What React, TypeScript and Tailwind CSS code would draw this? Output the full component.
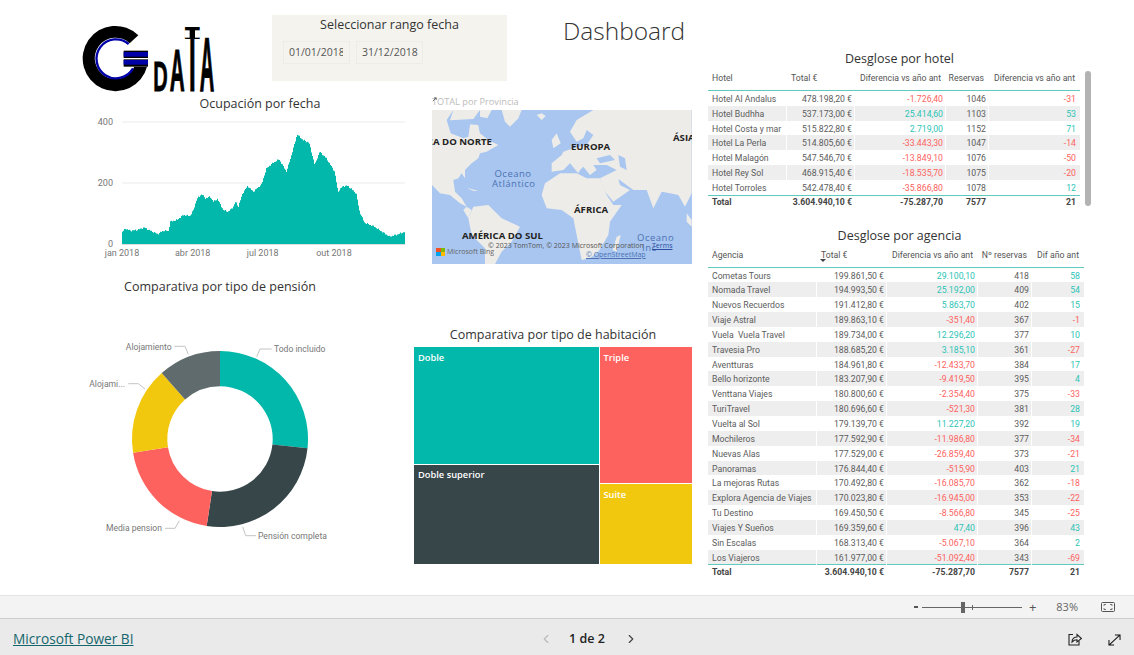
import { ChevronLeft, ChevronRight } from "lucide-react";

const ui = "font-['Open_Sans',sans-serif]";
const din = "font-['Roboto',sans-serif]";

type Row = [string, string, string, string, string];

const hotels: Row[] = [
  ["Hotel Al Andalus", "478.198,20 €", "-1.726,40", "1046", "-31"],
  ["Hotel Budhha", "537.173,00 €", "25.414,60", "1103", "53"],
  ["Hotel Costa y mar", "515.822,80 €", "2.719,00", "1152", "71"],
  ["Hotel La Perla", "514.805,60 €", "-33.443,30", "1047", "-14"],
  ["Hotel Malagón", "547.546,70 €", "-13.849,10", "1076", "-50"],
  ["Hotel Rey Sol", "468.915,40 €", "-18.535,70", "1075", "-20"],
  ["Hotel Torroles", "542.478,40 €", "-35.866,80", "1078", "12"],
];

const agencies: Row[] = [
  ["Cometas Tours", "199.861,50 €", "29.100,10", "418", "58"],
  ["Nomada Travel", "194.993,50 €", "25.192,00", "409", "54"],
  ["Nuevos Recuerdos", "191.412,80 €", "5.863,70", "402", "15"],
  ["Viaje Astral", "189.863,10 €", "-351,40", "367", "-1"],
  ["Vuela  Vuela Travel", "189.734,00 €", "12.296,20", "377", "10"],
  ["Travesia Pro", "188.685,20 €", "3.185,10", "361", "-27"],
  ["Aventturas", "184.961,80 €", "-12.433,70", "384", "17"],
  ["Bello horizonte", "183.207,90 €", "-9.419,50", "395", "4"],
  ["Venttana Viajes", "180.800,60 €", "-2.354,40", "375", "-33"],
  ["TuriTravel", "180.696,60 €", "-521,30", "381", "28"],
  ["Vuelta al Sol", "179.139,70 €", "11.227,20", "392", "19"],
  ["Mochileros", "177.592,90 €", "-11.986,80", "377", "-34"],
  ["Nuevas Alas", "177.529,00 €", "-26.859,40", "373", "-21"],
  ["Panoramas", "176.844,40 €", "-515,90", "403", "21"],
  ["La mejoras Rutas", "170.492,80 €", "-16.085,70", "362", "-18"],
  ["Explora Agencia de Viajes", "170.023,80 €", "-16.945,00", "353", "-22"],
  ["Tu Destino", "169.450,50 €", "-8.566,80", "345", "-25"],
  ["Viajes Y Sueños", "169.359,60 €", "47,40", "396", "43"],
  ["Sin Escalas", "168.313,40 €", "-5.067,10", "364", "2"],
  ["Los Viajeros", "161.977,00 €", "-51.092,40", "343", "-69"],
];

const tone = (v: string) => (v.startsWith("-") ? "text-[#FD625E]" : "text-[#2CC4B6]");

// measured from the reference, zoomed coordinates -> turned into daily bars below
const curve = [
  [156, 695], [165, 686], [180, 692], [200, 690], [222, 683], [240, 692], [262, 702], [280, 692], [295, 693], [300, 665],
  [320, 660], [340, 645], [360, 648], [370, 630], [380, 597], [395, 582], [405, 595], [420, 590], [430, 605], [442, 597],
  [460, 630], [475, 635], [490, 620], [497, 605], [505, 620], [518, 580], [533, 558], [550, 575], [575, 553], [590, 505],
  [610, 488], [628, 478], [650, 515], [668, 455], [682, 403], [700, 420], [718, 428], [735, 495], [750, 455], [770, 475],
  [795, 515], [805, 575], [820, 558], [835, 558], [860, 580], [870, 635], [885, 668], [915, 680], [960, 710], [985, 703],
  [1005, 696],
];

function areaPath() {
  let d = "M122 244";
  const n = 282;
  for (let i = 0; i <= n; i++) {
    const zx = 156 + ((1005 - 156) * i) / n;
    let k = 0;
    while (k < curve.length - 2 && curve[k + 1][0] < zx) k++;
    const [x0, y0] = curve[k];
    const [x1, y1] = curve[k + 1];
    const zy = y0 + ((y1 - y0) * (zx - x0)) / (x1 - x0);
    const wobble = Math.sin(i * 2.3) * 0.5 + Math.sin(i * 5.1) * 0.4;
    d += ` V${(zy / 3 + wobble).toFixed(1)} H${122 + i + 1}`;
  }
  return d + " V244 H122 Z";
}

function arc(a0: number, a1: number, R = 88, r = 52.7) {
  const p = (a: number, q: number) => {
    const t = (a * Math.PI) / 180;
    return `${(135 + q * Math.sin(t)).toFixed(2)} ${(109 - q * Math.cos(t)).toFixed(2)}`;
  };
  const big = a1 - a0 > 180 ? 1 : 0;
  return `M${p(a0, R)} A${R} ${R} 0 ${big} 1 ${p(a1, R)} L${p(a1, r)} A${r} ${r} 0 ${big} 0 ${p(a0, r)} Z`;
}

const Title = ({ children, className = "" }: { children: string; className?: string }) => (
  <h2 className={`${ui} text-[12.5px] leading-[16px] text-[#333] text-center whitespace-nowrap ${className}`}>{children}</h2>
);

function Logo() {
  return (
    <svg viewBox="0 0 145 80" className="w-[145px] h-[80px]">
      <g transform="scale(0.3333)">
        <path d="M181 52 A98 98 0 1 0 207 146 L169 146 A62 62 0 1 1 155 76 Z" fill="#000" />
        <path d="M152 78 A58.5 58.5 0 1 0 165 151" fill="none" stroke="#0000a8" strokeWidth="7" />
        <rect x="137" y="98" width="73" height="22" fill="#000" />
        <rect x="137" y="124" width="73" height="22" fill="#000" />
        <rect x="137" y="102" width="73" height="14" fill="#0000a8" />
        <rect x="137" y="126" width="73" height="14" fill="#0000a8" />
        <g fontFamily="Liberation Sans" fontWeight="700" fontSize="100" fill="#000" stroke="#000" strokeWidth="2">
          <text transform="translate(226 218) scale(0.6 1.3)">D</text>
          <text transform="translate(275 218) scale(0.62 1.79)">A</text>
          <text transform="translate(321 218) scale(0.72 2.7)">T</text>
        </g>
        {/* thins the stretched bar of the T, the logo's is a narrow cap */}
        <rect x="319" y="37" width="16" height="22" fill="#fff" />
        <rect x="351" y="37" width="16" height="22" fill="#fff" />
        <text transform="translate(365 218) scale(0.6 2.28)" fontFamily="Liberation Sans" fontWeight="700" fontSize="100" fill="#000" stroke="#000" strokeWidth="2">A</text>
      </g>
    </svg>
  );
}

function Slicer() {
  return (
    <div className={`${ui} w-[235px] h-[66px] bg-[#F4F3EE] flex flex-col`}>
      <div className="text-[12.5px] leading-[18px] mt-[1px] text-[#333] text-center">Seleccionar rango fecha</div>
      <div className="flex gap-[6px] ml-[11px] mt-[7px]">
        <div className="w-[67px] h-[23px] border border-[#EDECE6] pl-[5px] text-[10.5px] leading-[21px] text-[#555]">
          <div className="w-[54px] overflow-hidden whitespace-nowrap">01/01/2018</div>
        </div>
        <div className="w-[67px] h-[23px] border border-[#EDECE6] pl-[5px] text-[10.5px] leading-[21px] text-[#555] whitespace-nowrap">
          31/12/2018
        </div>
      </div>
    </div>
  );
}

function OccupancyChart() {
  return (
    <svg viewBox="90 112 320 152" className="w-[320px] h-[152px] ml-[90px]">
      <path d="M122 122H405M122 183H405" stroke="#ebebeb" strokeWidth="1" />
      <path d={areaPath()} fill="#01B8AA" />
      <path d="M122 244.5H405" stroke="#dcdcdc" strokeWidth="1" />
      <g fontFamily="Roboto" fontSize="9" fill="#777">
        <text x="113" y="125" textAnchor="end">400</text>
        <text x="113" y="186" textAnchor="end">200</text>
        <text x="113" y="247" textAnchor="end">0</text>
        <text x="122" y="256" textAnchor="middle">jan 2018</text>
        <text x="192.7" y="256" textAnchor="middle">abr 2018</text>
        <text x="262.7" y="256" textAnchor="middle">jul 2018</text>
        <text x="334" y="256" textAnchor="middle">out 2018</text>
      </g>
    </svg>
  );
}

function Donut() {
  // origin of this drawing is page (85, 330)
  return (
    <svg viewBox="0 0 260 225" className="w-[260px] h-[225px] ml-[85px] mt-[35px]">
      <path d={arc(0, 96)} fill="#01B8AA" />
      <path d={arc(96, 188.7)} fill="#374649" />
      <path d={arc(188.7, 261)} fill="#FD625E" />
      <path d={arc(261, 318.5)} fill="#F2C80F" />
      <path d={arc(318.5, 360)} fill="#5F6B6D" />
      <g fill="none" stroke="#c4c4c4" strokeWidth="1">
        <path d="M171.7 26.7L175 19H186.7" />
        <path d="M157.7 196.7L160.7 205.7H171" />
        <path d="M94.3 190.7L90 198.3H80" />
        <path d="M103.3 24.3L100 16.3H89.3" />
        <path d="M60 59L53.3 53.7H43.3" />
      </g>
      <g fontFamily="Roboto" fontSize="8.6" fill="#777">
        <text x="189" y="22">Todo incluido</text>
        <text x="173" y="208.6">Pensión completa</text>
        <text x="77" y="201" textAnchor="end">Media pension</text>
        <text x="86.7" y="20" textAnchor="end">Alojamiento</text>
        <text x="40" y="57" textAnchor="end">Alojami...</text>
      </g>
    </svg>
  );
}

function WorldMap() {
  const land = "absolute text-[9.6px] leading-[14px] font-bold text-[#222] whitespace-nowrap";
  const sea = "absolute text-[9.5px] tracking-[0.5px] text-[#4C72B4]";
  const fine = "absolute text-[7px] leading-[10px] whitespace-nowrap";
  return (
    <div className={`${ui} relative w-[260px] h-[154px] overflow-hidden bg-[#A8C6F0]`}>
      <svg viewBox="6 45 780 462" className="w-full h-full blur-[0.6px]">
        <g fill="#EDECE8">
          <path d="M6 45L70 45L50 75L62 115L100 130L115 125L120 90L135 95L150 115L175 135L205 150L170 170L150 175L145 190L125 205L105 225L105 250L95 235L85 250L70 255L75 290L95 310L110 335L90 325L60 300L30 295L6 270Z" />
          <path d="M70 45L150 45L130 72L60 76Z" />
          <path d="M215 45L275 45L265 70L240 95L225 80Z" />
          <path d="M320 60L335 55L347 63L335 75Z" />
          <path d="M150 45L185 45L172 70L150 65Z" />
          <path d="M120 88L145 90L150 118L128 110Z" />
          <path d="M110 278L145 288L130 288Z" />
          <path d="M365 135L380 115L392 145L370 160Z" />
          <path d="M395 180L365 205L365 230L400 225L420 205L445 235L450 225L460 215L480 240L500 225L490 210L530 210L560 225L510 250L525 290L550 320L600 285L570 270L565 252L610 285L650 285L670 340L695 290L720 295L745 300L765 335L785 295L785 45L490 45L440 75L420 110L440 140L460 130L470 105L490 120L470 150L430 160L400 170Z" />
          <path d="M335 300L345 265L390 235L440 235L470 250L510 250L530 300L550 330L575 330L540 380L535 420L505 470L480 490L455 495L440 420L430 370L395 345L350 340Z" />
          <path d="M560 425L572 420L560 470L548 465Z" />
          <path d="M115 370L130 335L175 330L215 370L270 395L245 440L215 470L195 507L165 507L165 460L125 420Z" />
          <path d="M770 355L785 375L785 395L770 380Z" />
          <path d="M110 335L125 345L115 370L100 345Z" />
        </g>
        <path d="M500 190L540 180L555 195L510 205Z M565 180L585 190L590 225L570 215Z" fill="#A8C6F0" />
      </svg>
      <span className={`${land} right-[200px] top-[25px]`}>AMÉRICA DO NORTE</span>
      <span className={`${land} left-[139px] top-[30px]`}>EUROPA</span>
      <span className={`${land} left-[241px] top-[21px]`}>ÁSIA</span>
      <span className={`${land} left-[142px] top-[93px]`}>ÁFRICA</span>
      <span className={`${land} left-[30px] top-[119px]`}>AMÉRICA DO SUL</span>
      <span className={`${sea} left-[60px] top-[59px] w-[42px] text-center leading-[10px]`}>Oceano Atlántico</span>
      <span className={`${sea} left-[205px] top-[122px] leading-[12px]`}>Oceano</span>
      <span className={`${sea} left-[210px] top-[132px] leading-[12px]`}>Inc</span>
      <span className={`${fine} left-[56px] top-[131px] text-[#555]`}>© 2023 TomTom, © 2023 Microsoft Corporation</span>
      <span className={`${fine} left-[220px] top-[131px] text-[#2a4fa0] underline`}>Terms</span>
      <span className={`${fine} left-[154px] top-[140px] text-[#4C72B4] underline`}>© OpenStreetMap</span>
      <div className="absolute left-[4px] top-[138px] grid grid-cols-2 w-[9px] h-[8px]">
        <span className="bg-[#F25022]" />
        <span className="bg-[#7FBA00]" />
        <span className="bg-[#00A4EF]" />
        <span className="bg-[#FFB900]" />
      </div>
      <span className={`${fine} left-[15px] top-[137px] text-[#666]`}>Microsoft Bing</span>
    </div>
  );
}

function Treemap() {
  const label = `${ui} text-[9.3px] leading-[12px] font-semibold text-white pl-[4px] pt-[4.5px]`;
  return (
    <div className="flex w-[278px] h-[216.5px] gap-[1px]">
      <div className="w-[184.5px] flex flex-col gap-[1px]">
        <div className={`${label} h-[116.5px] bg-[#01B8AA]`}>Doble</div>
        <div className={`${label} flex-1 bg-[#374649]`}>Doble superior</div>
      </div>
      <div className="flex-1 flex flex-col gap-[1px]">
        <div className={`${label} h-[136px] bg-[#FD625E]`}>Triple</div>
        <div className={`${label} flex-1 bg-[#F2C80F]`}>Suite</div>
      </div>
    </div>
  );
}

function DataTable({ cols, width, head, rows, total, rowH, sortFirst }: {
  cols: string;
  width: string;
  head: string[];
  rows: Row[];
  total: string[];
  rowH: string;
  sortFirst?: boolean;
}) {
  const cell = "h-full flex items-center justify-end pr-[2px] pt-[2px] border-r border-white";
  return (
    <div className={`${din} ${width} text-[8.7px] text-[#5c5c5c]`}>
      <div className={`grid ${cols} h-[24px] border-b-[1.5px] border-[#5FCABF] items-center`}>
        {head.map((h, i) => (
          <div key={i} className={`relative whitespace-nowrap text-[#555] ${i > 1 ? "text-right pr-[5px]" : "pl-[4px]"}`}>
            {h}
            {sortFirst && i === 1 && (
              <span className="absolute left-[3px] top-[10px] w-0 h-0 border-x-[3px] border-x-transparent border-t-[3px] border-t-[#444]" />
            )}
          </div>
        ))}
      </div>
      {rows.map((r, i) => (
        <div key={r[0]} className={`grid ${cols} ${rowH} ${i % 2 === 1 ? "bg-[#EEEEEE]" : ""}`}>
          <div className="h-full flex items-center pl-[4px] pt-[2px] whitespace-pre border-r border-white">{r[0]}</div>
          <div className={cell}>{r[1]}</div>
          <div className={`${cell} ${tone(r[2])}`}>{r[2]}</div>
          <div className={cell}>{r[3]}</div>
          <div className={`h-full flex items-center justify-end pr-[4px] pt-[2px] ${tone(r[4])}`}>{r[4]}</div>
        </div>
      ))}
      <div className={`grid ${cols} h-[15px] border-t-[1.5px] border-[#5FCABF] items-center font-bold text-[#444]`}>
        <div className="pl-[4px]">Total</div>
        <div className="text-right pr-[3px]">{total[0]}</div>
        <div className="text-right pr-[3px]">{total[1]}</div>
        <div className="text-right pr-[3px]">{total[2]}</div>
        <div className="text-right pr-[4px]">{total[3]}</div>
      </div>
    </div>
  );
}

function ZoomBar() {
  return (
    <div className={`${ui} h-[24px] bg-[#F3F3F3] border-t border-[#E4E4E4] border-b border-b-[#CCCCCC] flex items-center justify-end text-[#666]`}>
      <span className="w-[4px] h-[2px] bg-[#555]" />
      <div className="relative w-[100px] h-px bg-[#666] ml-[4px]">
        <span className="absolute left-[39px] top-[-5px] w-[4px] h-[11px] bg-[#666]" />
        <span className="absolute left-[50px] top-[-2px] w-px h-[5px] bg-[#666]" />
      </div>
      <span className="ml-[7px] text-[13px] leading-none text-[#555]">+</span>
      <span className="ml-[20px] text-[11px] text-[#666]">83%</span>
      <svg viewBox="0 0 14 10" className="w-[14px] h-[10px] ml-[23px] mr-[19px]" fill="none" stroke="#555" strokeWidth="1">
        <rect x="0.5" y="0.5" width="13" height="9" rx="1" />
        <path d="M3 4V2.5H5M9 2.5H11V4M11 6V7.5H9M5 7.5H3V6" strokeWidth="0.8" />
      </svg>
    </div>
  );
}

function PageBar() {
  return (
    <div className={`${ui} relative flex-1 bg-[#EAEAEA] flex items-center pl-[13px] pt-[4px]`}>
      <span className="text-[13.7px] text-[#14666C] underline">Microsoft Power BI</span>
      <div className="absolute left-[539px] top-[11px] flex items-center">
        <ChevronLeft className="w-[14px] h-[14px] text-[#bbb]" />
        <span className="ml-[16px] text-[12.5px] font-semibold text-[#222]">1 de 2</span>
        <ChevronRight className="ml-[19px] w-[14px] h-[14px] text-[#444]" />
      </div>
      <svg viewBox="0 0 14 13" className="absolute left-[1068px] top-[14px] w-[14px] h-[13px]" fill="none" stroke="#222" strokeWidth="1.1">
        <path d="M5 1.5H1V12H11V8" />
        <path d="M4 9C4 5.5 6.5 4 9 4V1.5L13.5 5.5L9 9V6.8C7 6.8 5.5 7.5 4 9Z" />
      </svg>
      <svg viewBox="0 0 14 13" className="absolute left-[1108px] top-[15px] w-[13px] h-[12px]" fill="none" stroke="#111" strokeWidth="1.1">
        <path d="M1 12L13 1M7.5 1H13V6.5M1 6.5V12H6.5" />
      </svg>
    </div>
  );
}

export default function App() {
  return (
    <div className="w-[1134px] h-[655px] bg-white flex flex-col overflow-hidden">
      <div className="h-[595px] flex shrink-0">
        <div className="w-[704px] flex flex-col">
          <div className="h-[92px] flex">
            <div className="ml-[78px] mt-[18px]"><Logo /></div>
            <div className="ml-[49px] mt-[15px]"><Slicer /></div>
            <h1 className={`${ui} ml-[56px] mt-[12px] text-[24.5px] leading-[38px] font-light text-[#333]`}>Dashboard</h1>
          </div>
          <div className="flex">
            <div className="w-[414px]">
              <Title className="pl-[106px] pt-[4px] w-[414px]">Ocupación por fecha</Title>
              <OccupancyChart />
              <Title className="mt-[15px] pl-[26px]">Comparativa por tipo de pensión</Title>
              <Donut />
            </div>
            <div className="w-[290px]">
              <div className={`relative ${ui} ml-[18px] mt-[2px] text-[9.2px] leading-[16px] text-[#BDBDBD]`}>
                TOTAL por Provincia
                <svg viewBox="0 0 6 6" className="absolute left-0 top-[3px] w-[5px] h-[5px]" fill="none" stroke="#555" strokeWidth="1">
                  <path d="M1 5L5 1M2.5 1H5V3.5" />
                </svg>
              </div>
              <div className="ml-[18px]"><WorldMap /></div>
              <Title className="mt-[63px] w-[278px]">Comparativa por tipo de habitación</Title>
              <div className="mt-[4px]"><Treemap /></div>
            </div>
          </div>
        </div>
        <div className="w-[430px] pl-[4px]">
          <Title className="mt-[51px] w-[383px]">Desglose por hotel</Title>
          <div className="relative w-[383px]">
            <DataTable
              cols="grid-cols-[79px_68px_91px_43px_91px]"
              width="w-[372px]"
              rowH="h-[14.8px]"
              head={["Hotel", "Total €", "Diferencia vs año ant", "Reservas", "Diferencia vs año ant"]}
              rows={hotels}
              total={["3.604.940,10 €", "-75.287,70", "7577", "21"]}
            />
            <span className="absolute left-[377px] top-[4px] w-[6px] h-[135px] rounded-full bg-[#B3B3B3]" />
          </div>
          <Title className="mt-[18px] w-[383px]">Desglose por agencia</Title>
          <DataTable
            cols="grid-cols-[109px_70px_91px_54px_52px]"
            width="w-[376px]"
            rowH="h-[14.85px]"
            sortFirst
            head={["Agencia", "Total €", "Diferencia vs año ant", "Nº reservas", "Dif año ant"]}
            rows={agencies}
            total={["3.604.940,10 €", "-75.287,70", "7577", "21"]}
          />
        </div>
      </div>
      <ZoomBar />
      <PageBar />
    </div>
  );
}
